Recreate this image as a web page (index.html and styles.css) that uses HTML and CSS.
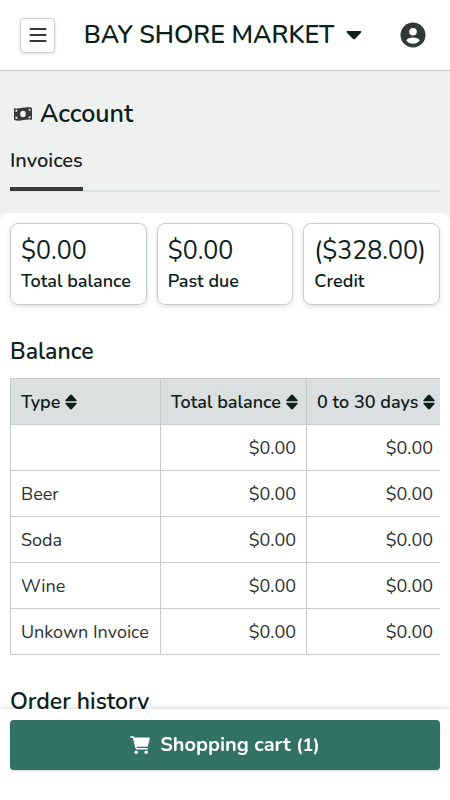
FILE: index.html
```html
<!DOCTYPE html>
<html lang="en">
<head>
<meta charset="utf-8">
<meta name="viewport" content="width=device-width, initial-scale=1">
<title>Account</title>
<link rel="stylesheet" href="styles.css">
</head>
<body>
<svg class="defs" aria-hidden="true">
  <symbol id="sort" viewBox="0 0 12 16"><path d="M1 7.200Q-.2 7 .5 5.900L5 1Q6 .2 7 1L11.500 5.900Q12.200 7 11 7.200ZM1 8.800H11Q12.200 9 11.500 10.100L7 15Q6 15.800 5 15L.5 10.100Q-.2 9 1 8.800Z"/></symbol>
</svg>
<header class="topbar">
  <button class="menu" type="button" aria-label="Menu">
    <svg width="18" height="16" viewBox="0 0 18 16" fill="none" stroke="currentColor" stroke-width="2.200" stroke-linecap="round"><path d="M1.500 2H16.500M1.500 8H16.500M1.500 14H16.500"/></svg>
  </button>
  <button class="store" type="button">
    <span>BAY SHORE MARKET</span>
    <svg width="16" height="10" viewBox="0 0 16 10" fill="currentColor"><path d="M1.500 1H14.500Q16 1.300 15 2.700L9.200 8.700Q8 9.700 6.800 8.700L1 2.700Q0 1.300 1.500 1Z"/></svg>
  </button>
  <button class="profile" type="button" aria-label="Profile">
    <svg width="26" height="26" viewBox="0 0 26 26"><circle cx="13" cy="13" r="12.500" fill="currentColor"/><circle cx="13" cy="9.800" r="3.800" fill="#fff"/><path d="M6.200 18.600C7.500 16.400 10 15.600 13 15.600S18.500 16.400 19.800 18.600C18 20.800 15.500 21.700 13 21.700S8 20.800 6.200 18.600Z" fill="#fff"/></svg>
  </button>
</header>
<main class="page">
  <section class="intro">
    <h1 class="title">
      <svg width="18" height="14" viewBox="0 0 18 14"><path d="M0 1.800Q0 1 .9 1.200C6 2.200 11-.8 17 .6Q18 .9 18 1.700V11.900Q18 13 17 12.800C12 11.800 7 14.600 1 13.300Q0 13 0 12.200Z" fill="#373938"/><ellipse cx="9" cy="7" rx="2.800" ry="3.200" fill="#eef0f0"/><path d="M1.500 2.800V5Q3.500 4.800 3.700 2.900ZM1.500 9.300V11.800H3.800Q3.500 9.700 1.500 9.300ZM14.300 2Q14.500 4 16.500 4.300V2.200ZM16.500 8.900Q14.400 9.200 14.200 11L16.500 11.200Z" fill="#eef0f0"/></svg>
      Account
    </h1>
    <nav class="tabs"><a class="tab" href="#invoices" aria-current="page">Invoices</a></nav>
  </section>
  <div class="sheet" id="invoices">
    <div class="cards">
      <div class="card"><span class="amount">$0.00</span><span class="label">Total balance</span></div>
      <div class="card"><span class="amount">$0.00</span><span class="label">Past due</span></div>
      <div class="card"><span class="amount">($328.00)</span><span class="label">Credit</span></div>
    </div>
    <h2 class="heading">Balance</h2>
    <div class="scroller">
      <table class="balance">
        <colgroup><col class="col-type"><col class="col-total"><col class="col-days"></colgroup>
        <thead>
          <tr>
            <th scope="col">Type <svg class="sort"><use href="#sort"/></svg></th>
            <th scope="col">Total balance <svg class="sort"><use href="#sort"/></svg></th>
            <th scope="col">0 to 30 days <svg class="sort"><use href="#sort"/></svg></th>
          </tr>
        </thead>
        <tbody>
          <tr><td></td><td>$0.00</td><td>$0.00</td></tr>
          <tr><td>Beer</td><td>$0.00</td><td>$0.00</td></tr>
          <tr><td>Soda</td><td>$0.00</td><td>$0.00</td></tr>
          <tr><td>Wine</td><td>$0.00</td><td>$0.00</td></tr>
          <tr><td>Unkown Invoice</td><td>$0.00</td><td>$0.00</td></tr>
        </tbody>
      </table>
    </div>
    <h2 class="heading">Order history</h2>
  </div>
</main>
<footer class="bottombar">
  <button class="cart" type="button">
    <svg width="20" height="18" viewBox="0 0 20 18"><path d="M.8 1H2.800Q3.500 1 3.700 1.700L6 11.500Q6.300 12.800 7.500 12.800H17.300" fill="none" stroke="#fff" stroke-width="1.600" stroke-linecap="round"/><path d="M4 1.400H19Q20.100 1.400 19.800 2.500L18 9.700Q17.700 10.800 16.600 10.800H6.200Z" fill="#fff"/><circle cx="6.200" cy="16.300" r="1.700" fill="#fff"/><circle cx="16.200" cy="16.300" r="1.700" fill="#fff"/></svg>
    <span>Shopping cart <span class="count">(1)</span></span>
  </button>
</footer>
</body>
</html>
```
FILE: styles.css
```css
* {
  box-sizing: border-box;
}

body {
  display: flex;
  flex-direction: column;
  height: 100vh;
  margin: 0;
  background: #fff;
  color: #0c201c;
  font-family: Nunito, "Noto Sans", sans-serif;
  font-size: 18px;
  line-height: 24px;
}

button {
  padding: 0;
  border: 0;
  background: none;
  color: inherit;
  font: inherit;
  cursor: pointer;
}

svg {
  display: block;
  flex: none;
}

.defs {
  position: absolute;
  width: 0;
  height: 0;
}

.topbar {
  display: flex;
  flex: none;
  align-items: center;
  justify-content: space-between;
  height: 71px;
  padding: 0 24px 0 20px;
  border-bottom: 1px solid #c8cccb;
}

.menu {
  display: grid;
  place-items: center;
  width: 35px;
  height: 35px;
  border: 1px solid #c9d0ce;
  border-radius: 4px;
  box-shadow: 0 1px 3px #10231f26;
  color: #373938;
}

.store {
  display: flex;
  flex: 1;
  align-items: center;
  justify-content: center;
  gap: 12px;
  padding-right: 9px;
  font-size: 25px;
  font-weight: 600;
  line-height: 32px;
}

.profile {
  color: #333736;
}

.page {
  flex: 1;
  min-height: 0;
  overflow-y: auto;
  scrollbar-width: none;
  background: #eff1f1;
}

.intro {
  padding: 26px 10px 21px;
}

.title {
  display: flex;
  align-items: center;
  gap: 8px;
  margin: 0;
  padding-left: 4px;
  font-size: 25px;
  font-weight: 600;
  line-height: 34px;
}

.tabs {
  display: flex;
  margin-top: 16px;
  border-bottom: 2px solid #dce4e2;
}

.tab {
  height: 44px;
  margin-bottom: -1px;
  border-bottom: 4px solid #373938;
  color: #1e2221;
  font-size: 20px;
  font-weight: 600;
  line-height: 28px;
  text-decoration: none;
}

.sheet {
  padding: 10px 10px 24px;
  border-radius: 8px 8px 0 0;
  background: #fff;
}

.cards {
  display: grid;
  grid-template-columns: repeat(3, 1fr);
  gap: 10px;
}

.card {
  display: flex;
  flex-direction: column;
  height: 82px;
  padding: 11px 10px;
  border: 1px solid #c7cdcb;
  border-radius: 8px;
  box-shadow: 0 2px 5px #10231f1f;
  white-space: nowrap;
}

.amount {
  font-size: 25px;
  line-height: 32px;
}

.label {
  font-weight: 600;
  line-height: 28px;
}

.heading {
  margin: 31px 0 10px;
  font-size: 23px;
  font-weight: 600;
  line-height: 32px;
}

.scroller {
  overflow-x: auto;
  scrollbar-width: none;
}

.balance {
  width: 434px;
  table-layout: fixed;
  border-collapse: collapse;
}

.col-type {
  width: 150px;
}

.col-total {
  width: 146px;
}

.balance th,
.balance td {
  height: 46px;
  padding: 0 10px;
  border: 1px solid #c7cccb;
  text-align: right;
  white-space: nowrap;
}

.balance th {
  background: #dbdfdf;
  font-weight: 600;
  text-align: left;
}

.balance td {
  color: #2b302f;
}

.balance td:first-child {
  text-align: left;
}

.sort {
  display: inline-block;
  width: 12px;
  height: 16px;
  fill: currentColor;
  vertical-align: -2px;
}

.bottombar {
  z-index: 1;
  flex: none;
  padding: 11px 10px 30px;
  background: #fff;
  box-shadow: 0 -1px 5px #00000026;
}

.cart {
  display: flex;
  align-items: center;
  justify-content: center;
  gap: 10px;
  width: 100%;
  height: 50px;
  border-radius: 4px;
  background: #327165;
  box-shadow: 0 1px 2px #10231f33;
  color: #fff;
  font-size: 20px;
  font-weight: 700;
}

.count {
  font-size: 18px;
}
```
